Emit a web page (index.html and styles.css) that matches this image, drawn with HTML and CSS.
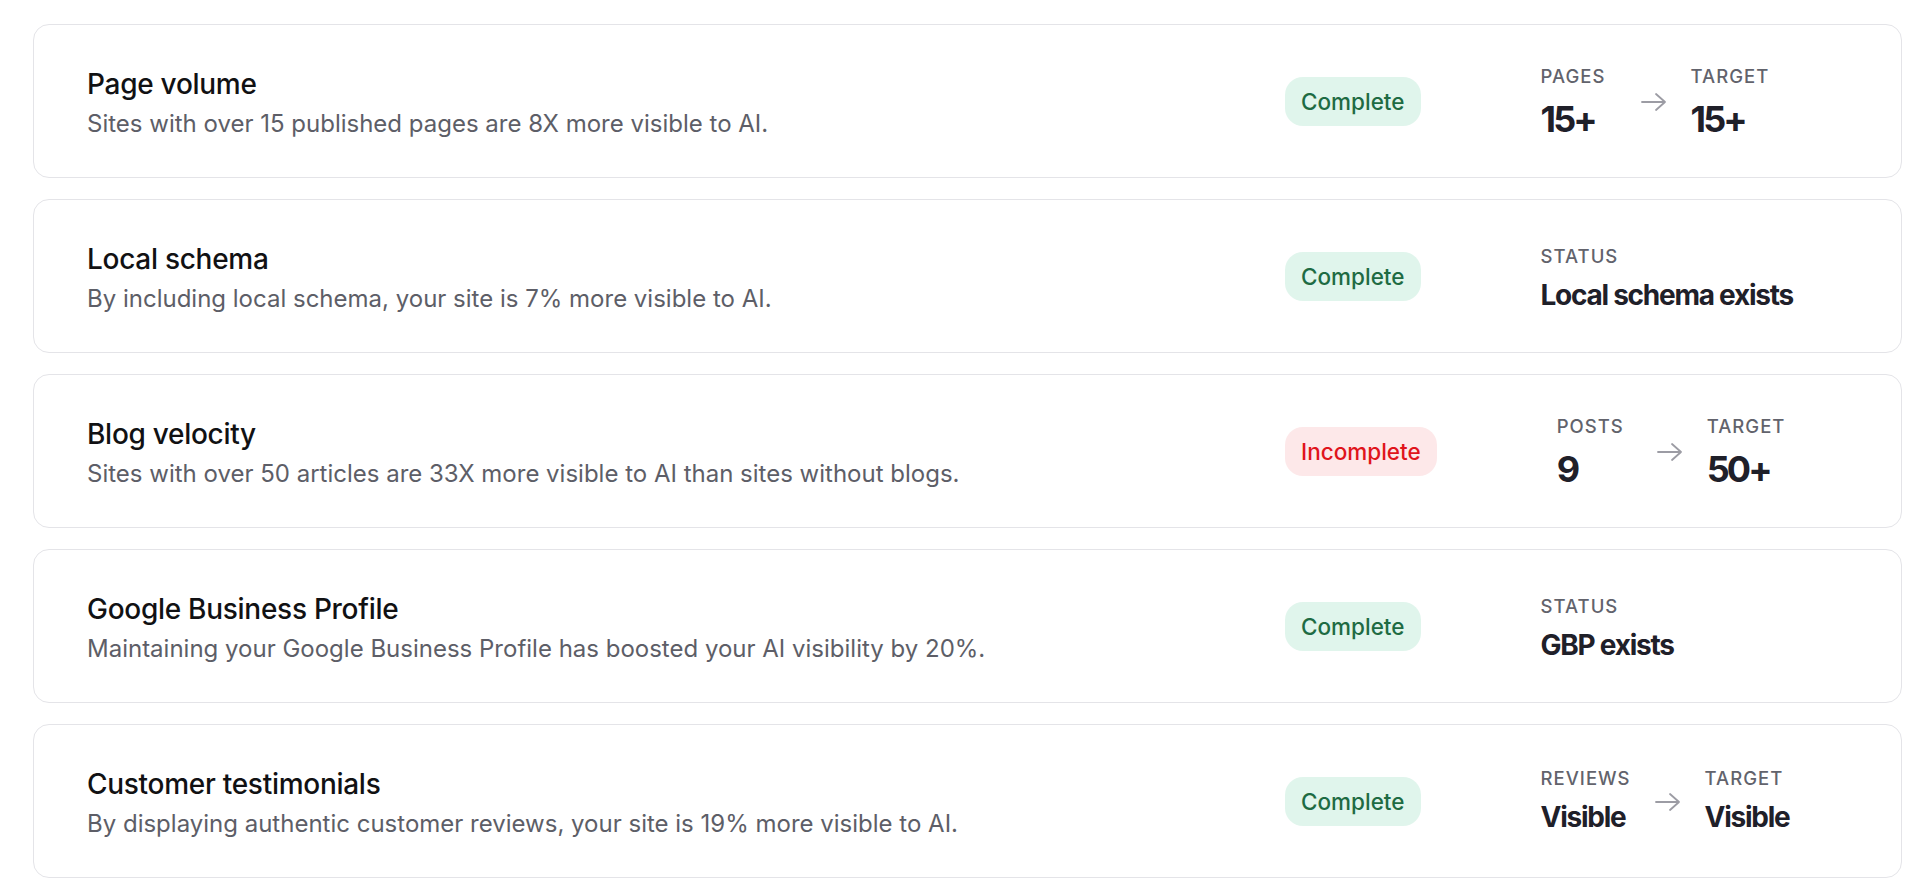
FILE: index.html
```html
<!DOCTYPE html>
<html>
<head>
  <title>AI visibility checklist</title>
  <link rel="stylesheet" href="styles.css">
</head>
<body>
  <div class="checklist">

    <div class="check-card">
      <div class="check-info">
        <h3 class="check-title">Page volume</h3>
        <p class="check-desc">Sites with over 15 published pages are 8X more visible to AI.</p>
      </div>
      <div class="check-side">
        <span class="badge badge-complete">Complete</span>
        <div class="metrics">
          <div class="metric">
            <span class="metric-label">Pages</span>
            <span class="metric-value number">15+</span>
          </div>
          <svg class="arrow" width="26" height="20" viewBox="0 0 26 20"><path d="M1 10h23M15 2l9 8-9 8" fill="none" stroke="#9c9ca4" stroke-width="1.8" stroke-linecap="round" stroke-linejoin="round"/></svg>
          <div class="metric">
            <span class="metric-label">Target</span>
            <span class="metric-value number">15+</span>
          </div>
        </div>
      </div>
    </div>

    <div class="check-card">
      <div class="check-info">
        <h3 class="check-title">Local schema</h3>
        <p class="check-desc">By including local schema, your site is 7% more visible to AI.</p>
      </div>
      <div class="check-side">
        <span class="badge badge-complete">Complete</span>
        <div class="metrics">
          <div class="metric metric-status">
            <span class="metric-label">Status</span>
            <span class="metric-value">Local schema exists</span>
          </div>
        </div>
      </div>
    </div>

    <div class="check-card">
      <div class="check-info">
        <h3 class="check-title">Blog velocity</h3>
        <p class="check-desc">Sites with over 50 articles are 33X more visible to AI than sites without blogs.</p>
      </div>
      <div class="check-side">
        <span class="badge badge-incomplete">Incomplete</span>
        <div class="metrics">
          <div class="metric">
            <span class="metric-label">Posts</span>
            <span class="metric-value number">9</span>
          </div>
          <svg class="arrow" width="26" height="20" viewBox="0 0 26 20"><path d="M1 10h23M15 2l9 8-9 8" fill="none" stroke="#9c9ca4" stroke-width="1.8" stroke-linecap="round" stroke-linejoin="round"/></svg>
          <div class="metric">
            <span class="metric-label">Target</span>
            <span class="metric-value number">50+</span>
          </div>
        </div>
      </div>
    </div>

    <div class="check-card">
      <div class="check-info">
        <h3 class="check-title">Google Business Profile</h3>
        <p class="check-desc">Maintaining your Google Business Profile has boosted your AI visibility by 20%.</p>
      </div>
      <div class="check-side">
        <span class="badge badge-complete">Complete</span>
        <div class="metrics">
          <div class="metric metric-status">
            <span class="metric-label">Status</span>
            <span class="metric-value">GBP exists</span>
          </div>
        </div>
      </div>
    </div>

    <div class="check-card">
      <div class="check-info">
        <h3 class="check-title">Customer testimonials</h3>
        <p class="check-desc">By displaying authentic customer reviews, your site is 19% more visible to AI.</p>
      </div>
      <div class="check-side">
        <span class="badge badge-complete">Complete</span>
        <div class="metrics">
          <div class="metric">
            <span class="metric-label">Reviews</span>
            <span class="metric-value">Visible</span>
          </div>
          <svg class="arrow" width="26" height="20" viewBox="0 0 26 20"><path d="M1 10h23M15 2l9 8-9 8" fill="none" stroke="#9c9ca4" stroke-width="1.8" stroke-linecap="round" stroke-linejoin="round"/></svg>
          <div class="metric">
            <span class="metric-label">Target</span>
            <span class="metric-value">Visible</span>
          </div>
        </div>
      </div>
    </div>

  </div>
</body>
</html>
```

FILE: styles.css
```css
body {
  margin: 0;
  font-family: Inter, "Noto Sans", Arial, sans-serif;
  background-color: #fff;
  color: #111;
}

.checklist {
  display: flex;
  flex-direction: column;
  gap: 21px;
  padding: 24px 18px 0 33px;
}

.check-card {
  display: grid;
  grid-template-columns: 1fr 562px;
  align-items: center;
  height: 154px;
  box-sizing: border-box;
  padding: 0 54px 0 53px;
  border: 1.5px solid #e4e4e8;
  border-radius: 16px;
  background-color: #fff;
}

.check-info {
  padding-top: 4px;
}

.check-title {
  margin: 0;
  font-size: 28px;
  line-height: 34px;
  font-weight: 500;
  color: #111113;
  letter-spacing: -0.01em;
}

.check-desc {
  margin: 7px 0 0;
  font-size: 24px;
  line-height: 32px;
  color: #5d5e67;
}

.check-side {
  display: flex;
  align-items: center;
  gap: 120px;
}

.badge {
  display: inline-block;
  padding: 0 16px;
  height: 49px;
  line-height: 49px;
  border-radius: 18px;
  font-size: 22.5px;
  font-weight: 500;
  white-space: nowrap;
}

.badge-complete {
  background-color: #e0f5ec;
  color: #1e6b43;
}

.badge-incomplete {
  background-color: #fde8e9;
  color: #e0141b;
}

.metrics {
  display: flex;
  align-items: center;
  gap: 24px;
  padding-top: 2px;
}

.metric {
  display: flex;
  flex-direction: column;
  min-width: 76px;
}

.metric-status {
  padding-top: 6px;
}

.metric-label {
  font-size: 18.5px;
  line-height: 22px;
  font-weight: 500;
  text-transform: uppercase;
  letter-spacing: 0.055em;
  color: #62636c;
}

.metric-value {
  margin-top: 8px;
  font-size: 28px;
  line-height: 40px;
  font-weight: 700;
  letter-spacing: -0.045em;
  color: #1f2029;
  white-space: nowrap;
}

.metric-value.number {
  margin-top: 12px;
  font-size: 36px;
  letter-spacing: -0.08em;
}

.arrow {
  display: block;
}
```
